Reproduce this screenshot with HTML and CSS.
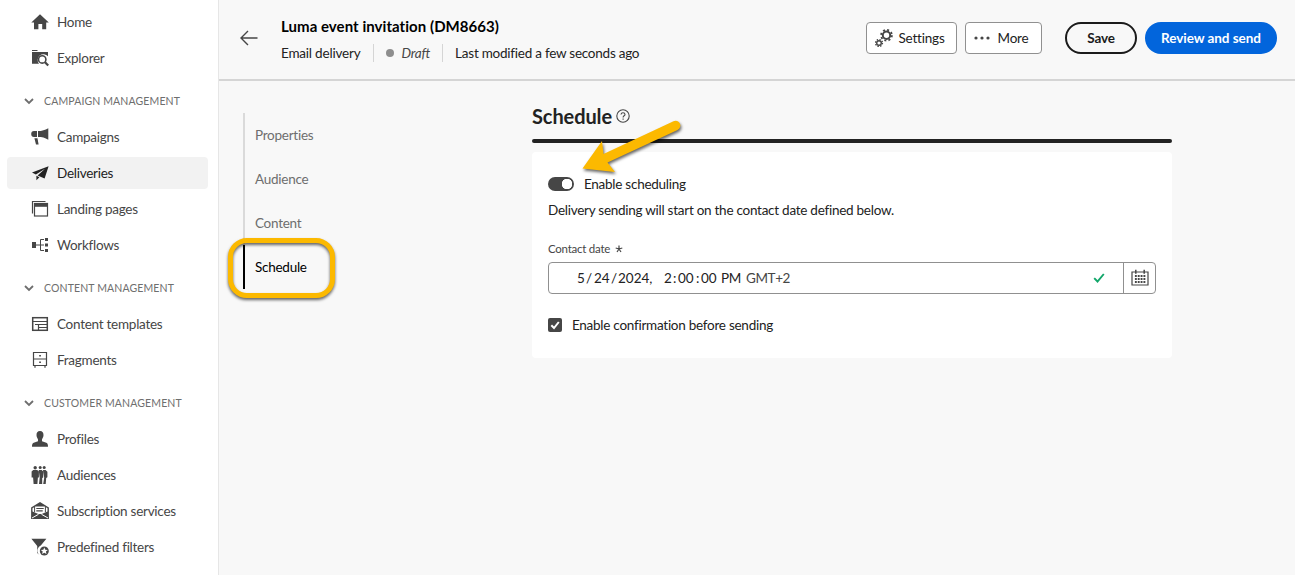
FILE: index.html
```html
<!DOCTYPE html>
<html lang="en">
<head>
<meta charset="utf-8">
<title>Luma event invitation</title>
<link rel="stylesheet" href="styles.css">
</head>
<body>
<div class="app">
  <nav class="sidebar">
    <a class="nav-item"><svg class="icon" viewBox="0 0 18 18"><path d="M9 1.2 17.8 9.6H15.2V16.2H11.2V11H7.4V16.2H3V9.6H.3Z"/></svg><span>Home</span></a>
    <a class="nav-item"><svg class="icon" viewBox="0 0 18 18"><path d="M1 1h5.5v1H1zM1 3h16v4.3A5.7 5.7 0 1 0 8 14.8H1z"/><circle cx="11.2" cy="10.4" r="3.7" fill="#fff" stroke="#464646" stroke-width="1.6"/><path d="m14 13.2 3.2 3.4" stroke="#464646" stroke-width="2.2"/></svg><span>Explorer</span></a>
    <div class="nav-heading"><svg class="chevron" viewBox="0 0 10 6"><path d="m1 1 4 4 4-4"/></svg><span>CAMPAIGN MANAGEMENT</span></div>
    <a class="nav-item"><svg class="icon" viewBox="0 0 18 18"><path d="M3 3H6V9H3Q.2 9 .2 6T3 3ZM7 3.100C11 3.100 14 2.200 17.300.3v11.500C14 9.500 11 9 7 9ZM3.400 10.200H6.500L7.600 16.500H5Z"/></svg><span>Campaigns</span></a>
    <a class="nav-item active"><svg class="icon" viewBox="0 0 18 18"><path d="M17.600 2.200 1 8.600 4.900 10.400 14 4.800 6.600 11.400 13.600 14.400ZM5.400 11.700v4.600l3-3.100Z"/></svg><span>Deliveries</span></a>
    <a class="nav-item"><svg class="icon line" viewBox="0 0 18 18"><path d="M1.500 13.500v-12h13"/><rect x="3.500" y="3.500" width="13" height="12.500"/><path d="M3.500 5.200h13" stroke-width="3.200"/></svg><span>Landing pages</span></a>
    <a class="nav-item"><svg class="icon" viewBox="0 0 18 18"><path d="M1 6h4v6H1zM14 2h3v3h-3zM14 7.500h3v3h-3zM14 13h3v3h-3z"/><path d="M5 9h8M13 3.500H9.500v11H13" fill="none" stroke="#464646"/></svg><span>Workflows</span></a>
    <div class="nav-heading"><svg class="chevron" viewBox="0 0 10 6"><path d="m1 1 4 4 4-4"/></svg><span>CONTENT MANAGEMENT</span></div>
    <a class="nav-item"><svg class="icon line" viewBox="0 0 18 18"><rect x="1.700" y="2.700" width="14.600" height="12.600" stroke-width="1.500"/><path d="M1.500 6.500h15M7.500 9.500v6M4 9.500h12.500M7.500 12.500h9" stroke-width="1.200"/></svg><span>Content templates</span></a>
    <a class="nav-item"><svg class="icon line" viewBox="0 0 18 18"><path d="M2.500 1.500h13v13h-13zM2.500 8h13M4 15v1.700M14 15v1.700"/><path d="M8.200 4.700h1.700M8.200 11.200h1.700" stroke-width="1.600"/></svg><span>Fragments</span></a>
    <div class="nav-heading"><svg class="chevron" viewBox="0 0 10 6"><path d="m1 1 4 4 4-4"/></svg><span>CUSTOMER MANAGEMENT</span></div>
    <a class="nav-item"><svg class="icon" viewBox="0 0 18 18"><path d="M9 1C6.500 1 5.400 2.900 5.500 5.300 5.600 7.400 6.800 8.700 7 9.500V11.300L2.700 12.700C1.300 13.300 1 14.500 1 16.800H17C17 14.500 16.700 13.300 15.300 12.700L11 11.300V9.500C11.200 8.700 12.400 7.400 12.500 5.300 12.600 2.900 11.500 1 9 1Z"/></svg><span>Profiles</span></a>
    <a class="nav-item"><svg class="icon" viewBox="0 0 18 18"><circle cx="4.200" cy="1.700" r="1.700"/><circle cx="9.200" cy="1.600" r="1.500"/><circle cx="13.200" cy="1.600" r="1.500"/><path d="M2.200 3.900h4l1.700 1.600v6H6.900L6.400 18H2.600L2.100 11.500H.6v-6zM7.700 3.900h3l1.500 1.600v6L11.200 12v6H8l.7-6.500zM12 3.900h2.600L16.400 5.700v5.500l-1.200.8-.5 6h-2.500l1-6.300z"/></svg><span>Audiences</span></a>
    <a class="nav-item"><svg class="icon" viewBox="0 0 18 18"><path d="M9 0 .1 5.600V17h17.800V5.600Z"/><path fill="#fff" d="M1.500 6.300 4.300 4.400h9.400l2.800 1.900v3.200L10.700 12H7.300L1.500 9.500Z"/><path d="M5.300 6.500h7.400M5.300 8.900h6.400" stroke="#464646" stroke-width="1.200"/><path d="M3.600 4.200v6M14.400 4.200v6" stroke="#464646"/><path d="m1 16 6.500-3.700M17 16l-6.500-3.700" stroke="#fff"/></svg><span>Subscription services</span></a>
    <a class="nav-item"><svg class="icon" viewBox="0 0 18 18"><path d="M.4 .8h15L9.800 7.500A5.500 5.500 0 0 0 8.300 16.700L6.200 15V8Z"/><circle cx="13.300" cy="13" r="4.500"/><path fill="#fff" d="m13.300 9.500 1 2.200 2.500.2-1.900 1.600.6 2.500-2.200-1.300-2.200 1.300.6-2.500-1.900-1.600 2.500-.2z"/></svg><span>Predefined filters</span></a>
  </nav>
  <div class="main">
    <header class="topbar">
      <svg class="back" viewBox="0 0 18 16"><path d="M17.500 8H1M8 1 1 8l7 7"/></svg>
      <div class="heading">
        <h1>Luma event invitation (DM8663)</h1>
        <div class="meta"><span class="kind">Email delivery</span><span class="status"><i class="dot"></i><em>Draft</em></span><span class="modified">Last modified a few seconds ago</span></div>
      </div>
      <div class="actions">
        <button class="btn settings"><svg class="gears" viewBox="0 0 18 18"><g fill="none" stroke="#464646"><circle cx="11.500" cy="6.300" r="3.700" stroke-width="2"/><circle cx="11.500" cy="6.300" r="5.400" stroke-width="1.800" stroke-dasharray="2 2.241"/><circle cx="4" cy="14" r="2.300" stroke-width="1.400"/><circle cx="4" cy="14" r="3.500" stroke-width="1.300" stroke-dasharray="1.400 1.350"/></g></svg><span>Settings</span></button>
        <button class="btn more"><svg class="dots" viewBox="0 0 16 4"><circle cx="2" cy="2" r="1.600"/><circle cx="8" cy="2" r="1.600"/><circle cx="14" cy="2" r="1.600"/></svg><span>More</span></button>
        <button class="pill save">Save</button>
        <button class="pill send">Review and send</button>
      </div>
    </header>
    <div class="content">
      <div class="tabs">
        <a>Properties</a><a>Audience</a><a>Content</a><a class="current">Schedule</a>
        <div class="callout"></div>
      </div>
      <section class="schedule">
        <div class="section-title"><h2>Schedule</h2><svg class="help" viewBox="0 0 14 14"><circle cx="7" cy="7" r="6.200"/><path d="M5 5.500C5.100 4.300 5.900 3.700 7 3.700s2 .7 2 1.700C9 6.800 7.100 6.800 7.100 8.400M7.100 9.500v1.200"/></svg></div>
        <svg class="arrow" viewBox="0 0 110 66"><path d="M6.500 50.500 26 23 27.500 36 97.500 3.200A4.800 4.800 0 0 1 101.500 12L31.500 44.500 39 54Z"/></svg>
        <div class="card">
          <label class="switch-row"><span class="switch"></span><span class="switch-label">Enable scheduling</span></label>
          <p>Delivery sending will start on the contact date defined below.</p>
          <div class="label"><span>Contact date</span><svg viewBox="0 0 8 8"><path d="M4 4V.5M4 4 .7 3M4 4l3.300-1M4 4 2 7M4 4l2 3"/></svg></div>
          <div class="field">
            <div class="date"><span class="day">5</span><span class="s1">/</span><span class="d2">24</span><span class="s2">/</span><span class="yr">2024,</span><span class="hr">2</span><span class="c">:</span><span class="mm">00</span><span class="c">:</span><span class="mm">00</span><span class="pm">PM</span><span class="tz">GMT+2</span></div>
            <svg class="valid" viewBox="0 0 12 10"><path d="m1.200 5.200 3.300 3.300L10.800 1"/></svg>
            <div class="cal"><svg viewBox="0 0 18 18"><path d="M1 3h16v13H1z" fill="none" stroke="#464646" stroke-width="1.200"/><path d="M4.800.800v4M13.200.800v4" stroke="#464646" stroke-width="1.500"/><path d="M3.900 7h10.500M3.900 10h10.500M3.900 13h10.500" stroke="#464646" stroke-width="2" stroke-dasharray="1.900 .950"/></svg></div>
          </div>
          <label class="check-row"><svg viewBox="0 0 14 14"><rect width="14" height="14" rx="2" fill="#464646"/><path d="m3.300 7.200 2.700 2.800L10.800 4" fill="none" stroke="#fff" stroke-width="2"/></svg><span>Enable confirmation before sending</span></label>
        </div>
      </section>
    </div>
  </div>
</div>
</body>
</html>
```
FILE: styles.css
```css
* { box-sizing: border-box; }
body { margin: 0; font: 13.5px/20px Lato, "Noto Sans", sans-serif; letter-spacing: -.26px; color: #222; background: #f8f8f8; }
h1, h2, p { margin: 0; }
.app { display: flex; width: 1295px; height: 575px; overflow: hidden; }
.sidebar { width: 219px; flex: none; background: #fff; border-right: 1px solid #e6e6e6; padding: 6px 10px 0 7px; display: flex; flex-direction: column; gap: 4px; }
.nav-item { height: 32px; flex: none; display: flex; align-items: center; gap: 8px; padding-left: 24px; border-radius: 4px; color: #464646; white-space: nowrap; }
.nav-item.active { background: #f2f2f2; color: #222; }
.icon { width: 18px; height: 18px; fill: currentColor; flex: none; overflow: visible; }
.icon.line { fill: none; stroke: currentColor; stroke-width: 1.2; }
.nav-heading { height: 22px; flex: none; margin: 12px 0 5px; padding-left: 17px; display: flex; align-items: center; gap: 10px; font-size: 10.5px; letter-spacing: .13px; color: #6e6e6e; white-space: nowrap; }
.chevron { width: 10px; height: 6px; fill: none; stroke: #6e6e6e; stroke-width: 1.8; overflow: visible; }
.main { flex: 1; display: flex; flex-direction: column; }
.topbar { height: 81px; flex: none; border-bottom: 2px solid #d5d5d5; display: flex; padding: 0 18px 0 21px; }
.back { width: 18px; height: 16px; margin-top: 30px; fill: none; stroke: #464646; stroke-width: 1.4; flex: none; }
.heading { margin: 16px 0 0 23px; white-space: nowrap; }
h1 { font-size: 15px; line-height: 20px; font-weight: 700; color: #000; letter-spacing: .05px; }
.meta { display: flex; margin-top: 8px; height: 18px; line-height: 18px; letter-spacing: -.2px; }
.kind { padding-right: 13px; }
.status { display: flex; align-items: center; border: solid #d5d5d5; border-width: 0 1px; padding: 0 12px; margin-right: 12px; color: #464646; }
.dot { width: 8px; height: 8px; border-radius: 50%; background: #8e8e8e; margin-right: 7px; }
.modified { letter-spacing: -.24px; }
.actions { margin: 22px 0 0 auto; display: flex; height: 32px; }
button { font: inherit; letter-spacing: -.2px; display: flex; align-items: center; justify-content: center; padding: 0; white-space: nowrap; }
.btn { height: 32px; border: 1px solid #909090; border-radius: 4px; background: #fff; color: #222; gap: 6px; justify-content: flex-start; padding-left: 8px; }
.settings { width: 91px; margin-right: 8px; }
.more { width: 77px; margin-right: 23.5px; gap: 8px; }
.gears { width: 18px; height: 18px; }
.dots { width: 16px; height: 4px; fill: #464646; }
.pill { height: 32px; border-radius: 16px; font-weight: 700; }
.save { width: 72px; border: 2px solid #1b1b1b; background: transparent; color: #1b1b1b; margin-right: 8px; }
.send { width: 132px; border: 0; background: #0265dc; color: #fff; letter-spacing: -.05px; }
.content { display: flex; padding-left: 24px; }
.tabs { width: 289px; flex: none; margin-top: 32px; position: relative; display: flex; flex-direction: column; }
.tabs a { height: 44px; line-height: 44px; padding-left: 10px; border-left: 2px solid #dadada; color: #6e6e6e; }
.tabs a.current { border-color: #000; color: #000; }
.callout { position: absolute; left: -15px; top: 125px; width: 107px; height: 60px; border: 5px solid #fcb900; border-radius: 19px; filter: drop-shadow(0 2px 1.500px rgba(0,0,0,.6)); }
.schedule { width: 640px; margin-top: 23px; position: relative; }
.section-title { display: flex; align-items: center; height: 24px; gap: 4px; }
h2 { font-size: 20px; line-height: 24px; font-weight: 700; color: #222; letter-spacing: -.1px; }
.help { width: 14px; height: 14px; fill: none; stroke: #464646; stroke-width: 1.100; }
.schedule::before { content: ""; display: block; position: absolute; left: 0; right: 0; top: 35px; height: 4px; border-radius: 2px; background: #222; }
.arrow { position: absolute; left: 44px; top: 14px; width: 110px; height: 66px; fill: #fcb900; overflow: visible; filter: drop-shadow(1px 2px 1.500px rgba(0,0,0,.6)); z-index: 2; }
.card { margin-top: 24px; height: 206px; background: #fff; border-radius: 4px; padding: 21px 16px 0; }
.switch-row { display: flex; align-items: center; height: 21px; gap: 10px; }
.switch { width: 26px; height: 14px; border-radius: 7px; background: radial-gradient(circle at 19px 7px, #fff 5px, #464646 5.500px); }
.card p { margin-top: 6px; height: 20px; }
.label { margin-top: 20px; height: 18px; line-height: 18px; display: flex; align-items: center; gap: 5px; font-size: 11.5px; letter-spacing: -.25px; color: #464646; }
.label svg { width: 8px; height: 8px; fill: none; stroke: #464646; stroke-width: 1.200; }
.field { width: 608px; height: 32px; margin-top: 4px; border: 1px solid #909090; border-radius: 4px; display: flex; align-items: center; padding-bottom: 1px; }
.date { display: flex; padding-left: 28px; letter-spacing: 0; white-space: nowrap; }
.day { width: 9px; } .s1 { width: 8px; } .d2 { width: 17px; } .s2 { width: 7px; } .yr { width: 46px; } .hr { width: 9px; } .c { width: 5px; } .mm { width: 18px; } .pm { width: 25px; margin-left: 2px; letter-spacing: -.3px; } .tz { color: #464646; letter-spacing: -.4px; }
.valid { width: 12px; height: 10px; margin-left: auto; margin-right: 18px; fill: none; stroke: #12a66a; stroke-width: 1.900; }
.cal { width: 32px; height: 30px; margin-bottom: -1px; border-left: 1px solid #909090; display: flex; align-items: center; justify-content: center; }
.cal svg { width: 18px; height: 18px; }
.check-row { margin-top: 21px; height: 20px; display: flex; align-items: center; gap: 10px; }
.check-row svg { width: 14px; height: 14px; }
```
